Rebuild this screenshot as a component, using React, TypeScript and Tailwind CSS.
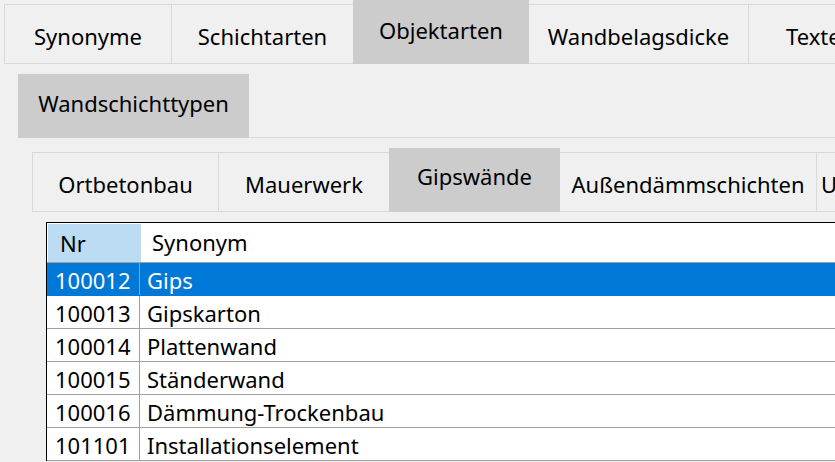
const font = { fontFamily: '"Noto Sans", "Open Sans", sans-serif' }

const rows = [
  ['100012', 'Gips'],
  ['100013', 'Gipskarton'],
  ['100014', 'Plattenwand'],
  ['100015', 'Ständerwand'],
  ['100016', 'Dämmung-Trockenbau'],
  ['101101', 'Installationselement'],
]

export default function App() {
  return (
    <div
      className="w-[835px] h-[462px] bg-[#f0f0f0] overflow-hidden text-[22px] text-black"
      style={font}
    >
      {/* Haupt-Tabs */}
      <div className="flex items-end h-[64px] pl-[4px] whitespace-nowrap">
        <div className="w-[168px] h-[60px] shrink-0 flex items-center justify-center pt-[4px] border border-[#d9d9d9]">Synonyme</div>
        <div className="w-[181px] h-[60px] shrink-0 flex items-center justify-center pt-[4px] border-y border-[#d9d9d9]">Schichtarten</div>
        <div className="w-[176px] h-[64px] shrink-0 flex items-center justify-center bg-[#cccccc] pb-[4px]">Objektarten</div>
        <div className="w-[220px] h-[60px] shrink-0 flex items-center justify-center pt-[4px] border-y border-r border-[#d9d9d9]">Wandbelagsdicke</div>
        <div className="w-[200px] h-[60px] shrink-0 flex items-center pl-[37px] pt-[4px] border-y border-[#d9d9d9]">Texte</div>
      </div>

      {/* Unter-Tab */}
      <div className="flex mt-[10px] pl-[18px]">
        <div className="w-[231px] h-[64px] shrink-0 flex items-center justify-center bg-[#cccccc] pb-[6px]">Wandschichttypen</div>
        <div className="flex-1 border-b border-[#d9d9d9]" />
      </div>

      {/* Wandschichttypen-Tabs */}
      <div className="flex items-end mt-[10px] pl-[32px] whitespace-nowrap">
        <div className="w-[187px] h-[60px] shrink-0 flex items-center justify-center pt-[4px] border border-[#d9d9d9]">Ortbetonbau</div>
        <div className="w-[170px] h-[60px] shrink-0 flex items-center justify-center pt-[4px] border-y border-[#d9d9d9]">Mauerwerk</div>
        <div className="w-[171px] h-[64px] shrink-0 flex items-center justify-center bg-[#cccccc] pb-[8px]">Gipswände</div>
        <div className="w-[257px] h-[60px] shrink-0 flex items-center justify-center pt-[4px] border-y border-r border-[#d9d9d9]">Außendämmschichten</div>
        <div className="w-[200px] h-[60px] shrink-0 flex items-center pl-[4px] pt-[4px] border-y border-[#d9d9d9]">Unterkonstruktion</div>
      </div>

      {/* Tabelle */}
      <div className="mt-[10px] ml-[46px] w-[820px] border-t border-l border-black bg-white">
        <div className="flex h-[40px] border-b border-[#a0a0a0]">
          <div className="w-[93px] shrink-0 bg-[#bcdcf4] flex items-center pl-[12px] mt-[1px] ml-[1px]">Nr</div>
          <div className="flex-1 flex items-center pl-[11px]">Synonym</div>
        </div>
        {rows.map(([nr, name], i) => (
          <div
            key={nr}
            className={
              i === 0
                ? 'flex h-[33px] bg-[#0078d7] text-white border-b border-[#0078d7]'
                : 'flex h-[33px] border-b border-[#a0a0a0]'
            }
          >
            <div className="w-[93px] shrink-0 flex items-center pl-[8px] pt-[2px] border-r border-[#a0a0a0]">{nr}</div>
            <div className="flex-1 flex items-center pl-[7px] pt-[2px]">{name}</div>
          </div>
        ))}
      </div>
    </div>
  )
}
